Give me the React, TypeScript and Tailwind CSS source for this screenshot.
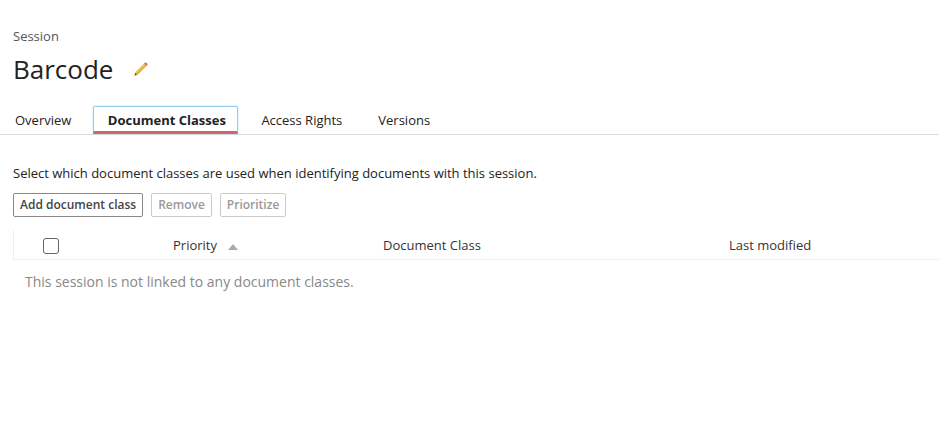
export default function App() {
  return (
    <div className="h-[436px] w-[939px] overflow-hidden bg-white font-['Open_Sans',sans-serif] text-[#222]">
      <div className="pl-[13px] pt-[28px]">
        <div className="text-[13px] leading-[16px] text-[#555]">Session</div>
        <div className="mt-[7px] flex h-[36px] items-center">
          <h1 className="text-[26px] font-normal leading-[36px] text-[#222]">Barcode</h1>
          <svg className="ml-[21px]" width="14" height="14" viewBox="0 0 14 14">
            <path d="M0.5 13.5 L1.5 10 L10 1.5 L12.5 4 L4 12.5 Z" fill="#e3b23c" />
            <path d="M1.5 10 L10 1.5 L11 2.5 L2.5 11 Z" fill="#f0cd66" />
            <path d="M0.5 13.5 L1.2 11 L3 12.8 Z" fill="#5c4a30" />
            <path d="M10 1.5 L11 0.6 Q11.8 0.2 12.5 0.8 L13.2 1.5 Q13.8 2.2 13.3 3 L12.5 4 Z" fill="#e4686e" />
          </svg>
        </div>
      </div>
      <div className="mt-[19px] flex h-[29px] items-stretch border-b border-[#ddd] pl-[2px] text-[13px]">
        <div className="flex items-center px-[13px] pt-[1px]">Overview</div>
        <div className="ml-[9px] flex w-[145px] items-center justify-center rounded-t-[2px] border-x border-t border-[#90cdf0] border-b-[3px] border-b-[#d9626b] pl-[2px] pt-[3px] font-bold shadow-[0_0_2px_#a8dcf5]">
          Document Classes
        </div>
        <div className="ml-[10px] flex items-center px-[13px] pt-[1px]">Access Rights</div>
        <div className="ml-[10px] flex items-center px-[13px] pt-[1px]">Versions</div>
      </div>
      <div className="pl-[13px]">
        <p className="mt-[29px] text-[13px] leading-[18px] text-[#222]">
          Select which document classes are used when identifying documents with this session.
        </p>
        <div className="mt-[11px] flex gap-[8px] text-[12px] font-semibold">
          <button className="h-[24px] rounded-[2px] border border-[#888] px-[6px] text-[#444]">Add document class</button>
          <button className="h-[24px] rounded-[2px] border border-[#ccc] px-[6px] text-[#999]">Remove</button>
          <button className="h-[24px] rounded-[2px] border border-[#ccc] px-[6px] text-[#999]">Prioritize</button>
        </div>
        <div className="mt-[13px] flex h-[30px] items-center border-b border-l border-[#eee] pt-[3px] text-[13px] text-[#333]">
          <span className="ml-[29px] h-[16px] w-[16px] rounded-[3px] border border-[#666]" />
          <span className="ml-[114px] w-[55px]">Priority</span>
          <svg className="mt-[1px]" width="10" height="6" viewBox="0 0 10 6"><path d="M5 0 L10 6 L0 6 Z" fill="#aaa" /></svg>
          <span className="ml-[145px] w-[346px]">Document Class</span>
          <span>Last modified</span>
        </div>
        <p className="mt-[12px] pl-[12px] text-[14px] leading-[20px] text-[#888]">
          This session is not linked to any document classes.
        </p>
      </div>
    </div>
  );
}
